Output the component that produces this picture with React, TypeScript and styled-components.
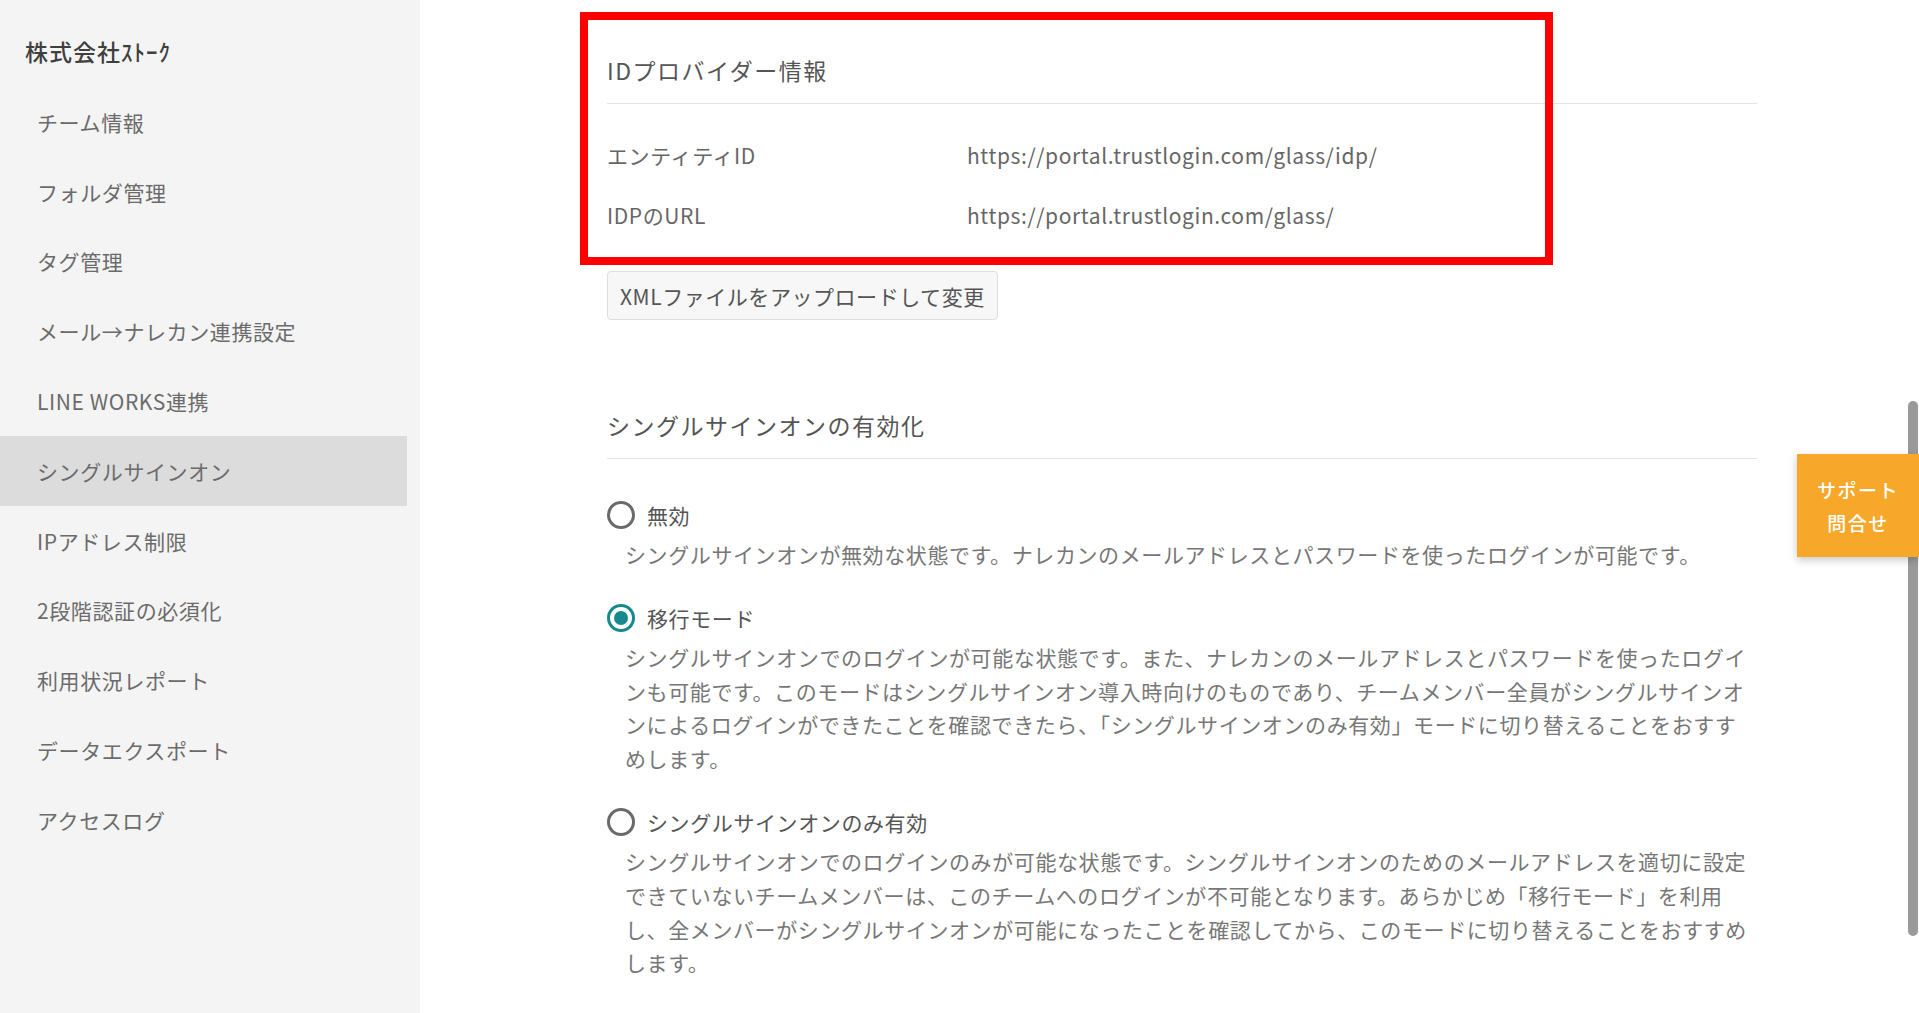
import React from "react";
import styled, { createGlobalStyle } from "styled-components";

const GlobalStyle = createGlobalStyle`
  html, body {
    margin: 0;
    height: 100%;
    overflow: hidden;
  }

  body {
    font-family: "Noto Sans CJK JP", "Noto Sans", sans-serif;
    background: #ffffff;
    color: #666666;
  }
`;

const navItems = [
    "チーム情報",
    "フォルダ管理",
    "タグ管理",
    "メール→ナレカン連携設定",
    "LINE WORKS連携",
    "シングルサインオン",
    "IPアドレス制限",
    "2段階認証の必須化",
    "利用状況レポート",
    "データエクスポート",
    "アクセスログ",
];

const ssoOptions = [
    {
        label: "無効",
        checked: false,
        description:
            "シングルサインオンが無効な状態です。ナレカンのメールアドレスとパスワードを使ったログインが可能です。",
    },
    {
        label: "移行モード",
        checked: true,
        description:
            "シングルサインオンでのログインが可能な状態です。また、ナレカンのメールアドレスとパスワードを使ったログインも可能です。このモードはシングルサインオン導入時向けのものであり、チームメンバー全員がシングルサインオンによるログインができたことを確認できたら、「シングルサインオンのみ有効」モードに切り替えることをおすすめします。",
    },
    {
        label: "シングルサインオンのみ有効",
        checked: false,
        description:
            "シングルサインオンでのログインのみが可能な状態です。シングルサインオンのためのメールアドレスを適切に設定できていないチームメンバーは、このチームへのログインが不可能となります。あらかじめ「移行モード」を利用し、全メンバーがシングルサインオンが可能になったことを確認してから、このモードに切り替えることをおすすめします。",
    },
];

export default function App() {
    return (
        <>
            <GlobalStyle />
            <Layout>
                <Sidebar />
                <Main>
                    <Content>
                        <IdpSection />
                        <SsoSection />
                    </Content>
                    <Annotation />
                </Main>
                <ScrollThumb />
                <SupportButton>
                    サポート
                    <br />
                    問合せ
                </SupportButton>
            </Layout>
        </>
    );
}

const Layout = styled.div`
    position: relative;
    display: flex;
    height: 1013px;
`;

const Sidebar: React.FC = () => {
    return (
        <SidebarContainer>
            <TeamName>株式会社ｽﾄｰｸ</TeamName>
            <NavList>
                {navItems.map((item) => (
                    <NavItem key={item} $active={item === "シングルサインオン"}>
                        {item}
                    </NavItem>
                ))}
            </NavList>
        </SidebarContainer>
    );
};

const SidebarContainer = styled.aside`
    flex: none;
    width: 420px;
    box-sizing: border-box;
    padding-top: 34px;
    background: #f4f4f4;
`;

const TeamName = styled.div`
    padding-left: 25px;
    margin-bottom: 19px;
    font-size: 23px;
    line-height: 34px;
    letter-spacing: 1px;
    font-weight: 500;
    color: #3f3f3f;
`;

const NavList = styled.ul`
    list-style: none;
    margin: 0 13px 0 0;
    padding: 0;
`;

const NavItem = styled.li<{ $active?: boolean }>`
    display: flex;
    align-items: center;
    height: 69.8px;
    padding-left: 37px;
    font-size: 21px;
    letter-spacing: 0.6px;
    color: #6b6b6b;
    background: ${(p) => (p.$active ? "#dcdcdc" : "transparent")};
`;

const Main = styled.main`
    position: relative;
    flex: 1;
    padding: 53px 0 0 187px;
`;

const Content = styled.div`
    width: 1150px;
`;

const SectionTitle = styled.h2`
    margin: 0;
    padding-bottom: 16px;
    border-bottom: 1px solid #e4e4e4;
    font-size: 23px;
    font-weight: normal;
    line-height: 34px;
    letter-spacing: 1.5px;
    color: #555555;
`;

const IdpSection: React.FC = () => {
    return (
        <section>
            <SectionTitle>IDプロバイダー情報</SectionTitle>
            <InfoList>
                <InfoLabel>エンティティID</InfoLabel>
                <InfoValue>https://portal.trustlogin.com/glass/idp/</InfoValue>
                <InfoLabel>IDPのURL</InfoLabel>
                <InfoValue>https://portal.trustlogin.com/glass/</InfoValue>
            </InfoList>
            <UploadButton>XMLファイルをアップロードして変更</UploadButton>
        </section>
    );
};

const InfoList = styled.dl`
    display: grid;
    grid-template-columns: 360px 1fr;
    grid-auto-rows: 60px;
    align-items: center;
    margin: 21px 0 0;
    font-size: 21px;
    letter-spacing: 0.6px;
`;

const InfoLabel = styled.dt`
    color: #666666;
`;

const InfoValue = styled.dd`
    margin: 0;
    color: #666666;
`;

const UploadButton = styled.button`
    display: block;
    height: 49px;
    margin-top: 26px;
    padding: 0 12px;
    border: 1px solid #dedede;
    border-radius: 4px;
    background: #f7f7f7;
    font-family: inherit;
    font-size: 21px;
    letter-spacing: 0.55px;
    color: #555555;
`;

const SsoSection: React.FC = () => {
    return (
        <SsoContainer>
            <SectionTitle>シングルサインオンの有効化</SectionTitle>
            <OptionList>
                {ssoOptions.map((option) => (
                    <div key={option.label}>
                        <OptionRow>
                            <RadioCircle $checked={option.checked} />
                            {option.label}
                        </OptionRow>
                        <OptionText>{option.description}</OptionText>
                    </div>
                ))}
            </OptionList>
        </SsoContainer>
    );
};

const SsoContainer = styled.section`
    margin-top: 88px;
`;

const OptionList = styled.div`
    display: flex;
    flex-direction: column;
    gap: 29px;
    margin-top: 39px;
`;

const OptionRow = styled.label`
    display: flex;
    align-items: center;
    gap: 12px;
    height: 34px;
    font-size: 21px;
    letter-spacing: 0.6px;
    color: #555555;
`;

const RadioCircle = styled.span<{ $checked?: boolean }>`
    position: relative;
    flex: none;
    width: 28px;
    height: 28px;
    box-sizing: border-box;
    border: 3px solid ${(p) => (p.$checked ? "#16898e" : "#6a6a6a")};
    border-radius: 50%;

    &::after {
        content: "";
        display: ${(p) => (p.$checked ? "block" : "none")};
        position: absolute;
        inset: 4px;
        border-radius: 50%;
        background: #16898e;
    }
`;

const OptionText = styled.p`
    margin: 6px 0 0;
    padding-left: 18px;
    font-size: 21px;
    line-height: 33.8px;
    letter-spacing: 0.6px;
    color: #777777;
`;

const Annotation = styled.div`
    position: absolute;
    left: 160px;
    top: 12px;
    width: 973px;
    height: 253px;
    box-sizing: border-box;
    border: 8px solid #ff0000;
    pointer-events: none;
`;

const ScrollThumb = styled.div`
    position: absolute;
    right: 1px;
    top: 401px;
    width: 10px;
    height: 535px;
    border-radius: 5px;
    background: #9a9a9a;
`;

const SupportButton = styled.div`
    position: absolute;
    right: 0;
    top: 454px;
    width: 122px;
    height: 103px;
    display: flex;
    align-items: center;
    justify-content: center;
    text-align: center;
    background: #f7a82a;
    box-shadow: 0 3px 8px rgba(0, 0, 0, 0.22);
    font-size: 19px;
    line-height: 33px;
    letter-spacing: 0.08em;
    font-weight: 500;
    color: #ffffff;
`;
